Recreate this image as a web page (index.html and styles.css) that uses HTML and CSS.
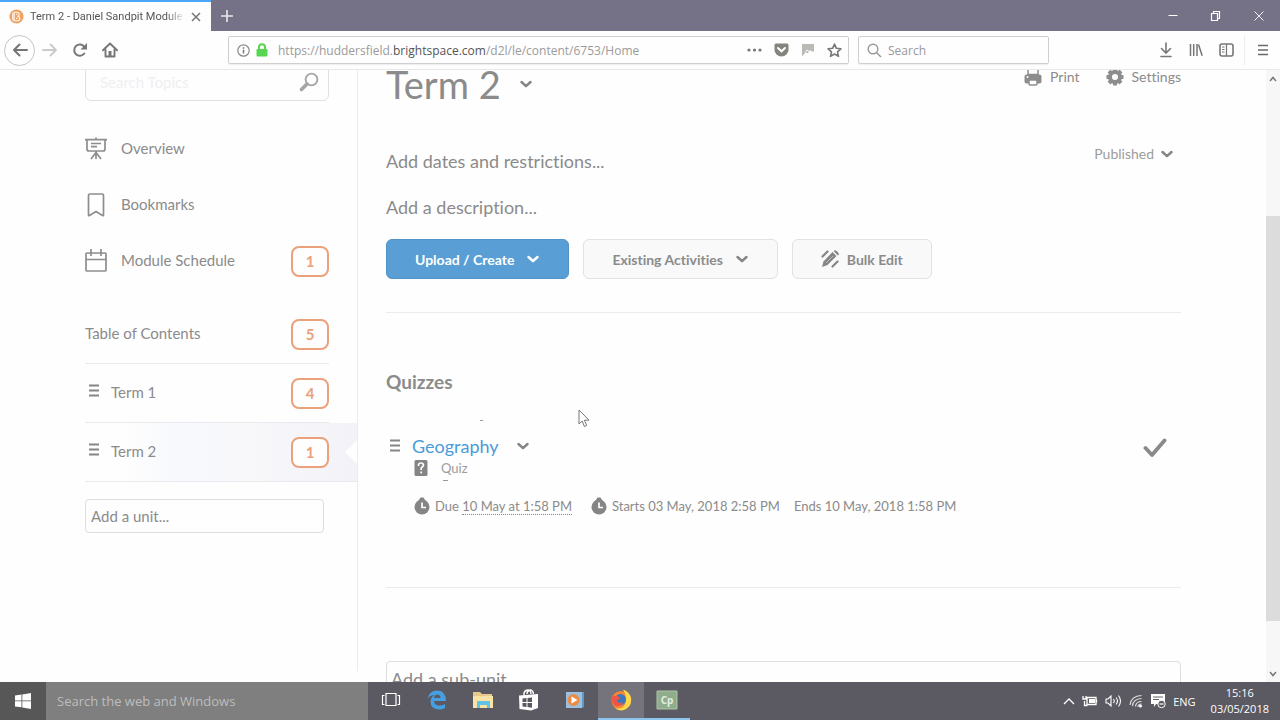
FILE: index.html
```html
<!DOCTYPE html>
<html lang="en">
<head>
<meta charset="utf-8">
<title>Term 2 - Daniel Sandpit Module</title>
<link rel="stylesheet" href="styles.css">
</head>
<body>
<svg class="defs" aria-hidden="true">
  <symbol id="chev" viewBox="0 0 14 14"><path d="M2.500 5 7 9.200 11.500 5" fill="none" stroke="currentColor" stroke-width="2.500" stroke-linecap="round" stroke-linejoin="round"/></symbol>
  <symbol id="grip" viewBox="0 0 10 14"><path d="M0 1.500h10M0 6.500h10M0 11.500h10" stroke="currentColor" stroke-width="1.800"/></symbol>
  <symbol id="clock" viewBox="0 0 16 18"><path d="M4 4.500 6.500.6h3L12 4.500z" fill="currentColor"/><circle cx="8" cy="10" r="7.500" fill="currentColor"/><path d="M8 5.500V10.500h4" fill="none" stroke="#fff" stroke-width="1.700"/></symbol>
</svg>

<header class="tabbar">
  <div class="tab">
    <svg class="favicon" viewBox="0 0 16 16"><circle cx="8" cy="8" r="7.500" fill="#f0a05f"/><path d="M5.500 3.500h3.500q2 .2 2 2.200t-2 2.100q2.500.2 2.500 2.500T9 12.500H5.500zM4 4v8M7.500 5.500H9M7.500 10H9" fill="none" stroke="#fff" stroke-width="1.100"/></svg>
    <span class="tab-title">Term 2 - Daniel Sandpit Module</span>
    <button class="bare" aria-label="Close tab"><svg width="10" height="10" viewBox="0 0 10 10"><path d="m1 1 8 8M9 1 1 9" stroke="#777" stroke-width="1.500"/></svg></button>
  </div>
  <button class="bare new-tab" aria-label="New tab"><svg width="14" height="14" viewBox="0 0 14 14"><path d="M7 1v12M1 7h12" stroke="#e9e8ef" stroke-width="1.600"/></svg></button>
  <div class="window-buttons">
    <button class="bare" aria-label="Minimise"><svg width="12" height="12" viewBox="0 0 12 12"><path d="M1.500 5.500h9" stroke="#fff"/></svg></button>
    <button class="bare" aria-label="Restore"><svg width="12" height="12" viewBox="0 0 12 12"><path d="M1.500 3.500h6v7h-6zM3.500 3.500v-2h6v7h-2" fill="none" stroke="#fff" stroke-width="1.200"/></svg></button>
    <button class="bare" aria-label="Close"><svg width="12" height="12" viewBox="0 0 12 12"><path d="m1.500 1.500 9 9M10.500 1.500l-9 9" stroke="#f1f0f5"/></svg></button>
  </div>
</header>

<nav class="toolbar" aria-label="Browser">
  <button class="bare back" aria-label="Back"><svg width="16" height="14" viewBox="0 0 16 14"><path d="M15 7H2M7.500 1.500 2 7l5.500 5.500" fill="none" stroke="#747474" stroke-width="2" stroke-linecap="round" stroke-linejoin="round"/></svg></button>
  <button class="bare tool" aria-label="Forward"><svg width="16" height="14" viewBox="0 0 16 14"><path d="M1 7h13M8.500 1.500 14 7l-5.500 5.500" fill="none" stroke="#c9c9c9" stroke-width="1.800" stroke-linecap="round" stroke-linejoin="round"/></svg></button>
  <button class="bare tool" aria-label="Reload"><svg width="16" height="16" viewBox="0 0 16 16"><path d="M12.300 11.500A5.600 5.600 0 1 1 12.500 5" fill="none" stroke="#777" stroke-width="2" stroke-linecap="round"/><path d="M15 1v6.500H8.500z" fill="#777"/></svg></button>
  <button class="bare tool" aria-label="Home"><svg width="16" height="16" viewBox="0 0 16 16"><path d="M1 8.300 8 1.500l7 6.800M3.500 7.500v7h9v-7" fill="none" stroke="#777" stroke-width="1.900" stroke-linecap="round" stroke-linejoin="round"/><path d="M6.500 9h3v5.500h-3z" fill="#777"/></svg></button>
  <div class="address">
    <svg width="13" height="13" viewBox="0 0 13 13"><circle cx="6.500" cy="6.500" r="5.700" fill="none" stroke="#8a8a8a" stroke-width="1.200"/><path d="M6.500 5.800v3.700M6.500 3.300v1.500" stroke="#777" stroke-width="1.500"/></svg>
    <svg width="12" height="14" viewBox="0 0 12 14"><path d="M3 6.500V4.300a3 3 0 0 1 6 0v2.200" fill="none" stroke="#58d651" stroke-width="2"/><rect x=".5" y="6" width="11" height="7.500" rx="1" fill="#58d651"/></svg>
    <span class="url">https://huddersfield.<b>brightspace.com</b>/d2l/le/content/6753/Home</span>
    <svg width="15" height="14" viewBox="0 0 15 14"><g fill="#777"><circle cx="2" cy="7" r="1.600"/><circle cx="7.500" cy="7" r="1.600"/><circle cx="13" cy="7" r="1.600"/></g></svg>
    <svg width="15" height="14" viewBox="0 0 15 14"><path d="M2 .5h11q1.500 0 1.500 1.500v5a7 6.500 0 0 1-14 0V2Q.5.500 2 .5z" fill="#84847e"/><path d="m4 5 3.500 3.300L11 5" fill="none" stroke="#fff" stroke-width="2" stroke-linecap="round"/></svg>
    <svg width="14" height="14" viewBox="0 0 14 14"><path d="M2 1h10q1 0 1 1v6.500h-2L9 7 7 10H4l-3 3.500V2q0-1 1-1z" fill="#b9b9b5"/><path d="m4 10 2-3 2 1.500" fill="none" stroke="#fff"/></svg>
    <svg width="15" height="15" viewBox="0 0 15 15"><path d="m7.500 1.200 1.900 4.100 4.500.5-3.400 3 1 4.500-4-2.300-4 2.300 1-4.500-3.400-3 4.500-.5z" fill="none" stroke="#777" stroke-width="1.600" stroke-linejoin="round"/></svg>
  </div>
  <label class="browser-search">
    <svg width="15" height="15" viewBox="0 0 15 15"><circle cx="6" cy="6" r="4.800" fill="none" stroke="#999" stroke-width="1.400"/><path d="m9.500 9.500 4.500 4.500" stroke="#999" stroke-width="1.500"/></svg>
    <input type="text" placeholder="Search" aria-label="Search the web">
  </label>
  <div class="tools-end">
    <button class="bare" aria-label="Downloads"><svg width="14" height="16" viewBox="0 0 14 16"><path d="M7 1v9.500M2.500 6.500 7 11l4.500-4.500M2 14.500h10" fill="none" stroke="#777" stroke-width="1.600" stroke-linecap="round"/></svg></button>
    <button class="bare" aria-label="Library"><svg width="14" height="14" viewBox="0 0 14 14"><path d="M1.500 1v12M4.700 1v12M8 1v12M9.500 1.500l3.700 11.300" stroke="#777" stroke-width="1.500"/></svg></button>
    <button class="bare" aria-label="Sidebars"><svg width="15" height="14" viewBox="0 0 15 14"><rect x="1" y="1" width="13" height="12" rx="2" fill="none" stroke="#777" stroke-width="1.600"/><path d="M7.500 1v12M3 4h2.500M3 6.500h2.500M3 9h2.500" stroke="#777" stroke-width="1.200"/></svg></button>
    <button class="bare menu" aria-label="Menu"><svg width="12" height="14" viewBox="0 0 12 14"><path d="M1 2.500h10M1 7h10M1 11.500h10" stroke="#6a6a6a" stroke-width="1.700"/></svg></button>
  </div>
</nav>

<div class="page">
  <aside class="sidebar">
    <label class="topic-search">
      <input type="text" placeholder="Search Topics" aria-label="Search Topics">
      <svg width="20" height="20" viewBox="0 0 20 20"><circle cx="12.500" cy="7.500" r="5.900" fill="none" stroke="#a5a5a5" stroke-width="1.900"/><path d="m8 12-5.500 5.500" stroke="#a5a5a5" stroke-width="3.600" stroke-linecap="round"/></svg>
    </label>
    <nav class="links" aria-label="Module">
      <a href="#"><svg width="22" height="24" viewBox="0 0 22 24" fill="none" stroke="#8d8d8d" stroke-width="1.700"><path d="M0 2.700h22M11 .5v2M2 3v9q0 2 2 2h14q2 0 2-2V3M6 6.500h10M6 9.700h6M11 14v8M11 15.500l-5 6.500M11 15.500l5 6.500"/></svg><span>Overview</span></a>
      <a href="#"><svg width="22" height="24" viewBox="0 0 22 24"><path d="M5 1h12q1.500 0 1.500 1.500V22q0 1-1 .5L11 18.500l-6.500 4q-1 .5-1-.5V2.500Q3.500 1 5 1z" fill="none" stroke="#8d8d8d" stroke-width="1.700"/></svg><span>Bookmarks</span></a>
      <a href="#"><svg width="22" height="24" viewBox="0 0 22 24"><path d="M1 5q0-1 1-1h18q1 0 1 1v16q0 1-1 1H2q-1 0-1-1zM1 10.500h20M6 0v7M16 0v7" fill="none" stroke="#8d8d8d" stroke-width="1.700"/></svg><span>Module Schedule</span><b class="badge">1</b></a>
    </nav>
    <div class="toc">
      <a class="unit" href="#"><span>Table of Contents</span><b class="badge">5</b></a>
      <a class="unit" href="#"><svg class="grip"><use href="#grip"/></svg><span>Term 1</span><b class="badge">4</b></a>
      <a class="unit selected" href="#"><svg class="grip"><use href="#grip"/></svg><span>Term 2</span><b class="badge">1</b></a>
    </div>
    <input class="field add-unit" type="text" placeholder="Add a unit..." aria-label="Add a unit">
  </aside>

  <main class="content">
    <div class="heading">
      <h1>Term 2</h1>
      <button class="bare" aria-label="Unit actions"><svg class="chev"><use href="#chev"/></svg></button>
      <div class="actions">
        <button class="bare action"><svg width="18" height="18" viewBox="0 0 18 18"><path d="M4 0h10v6.500H4z" fill="#fefefe" stroke="#8d8d8d" stroke-width="1.500"/><rect x=".5" y="6.500" width="17" height="9" rx="2" fill="#8d8d8d"/><rect x="5" y="12" width="8" height="5" rx="1" fill="#fefefe" stroke="#8d8d8d" stroke-width="1.500"/><circle cx="3.500" cy="9" r="1" fill="#fefefe"/></svg>Print</button>
        <button class="bare action"><svg width="18" height="18" viewBox="0 0 18 18"><g fill="none" stroke="#8d8d8d"><circle cx="9" cy="9" r="5" stroke-width="4"/><path d="M9 .5v3M9 14.500v3M.5 9h3M14.500 9h3M3 3l2 2M13 13l2 2M15 3l-2 2M5 13l-2 2" stroke-width="4"/></g></svg>Settings</button>
      </div>
    </div>
    <div class="dates">
      <button class="bare prompt">Add dates and restrictions...</button>
      <button class="bare published">Published <svg class="chev"><use href="#chev"/></svg></button>
    </div>
    <button class="bare prompt">Add a description...</button>
    <div class="buttons">
      <button class="btn primary">Upload / Create <svg class="chev"><use href="#chev"/></svg></button>
      <button class="btn">Existing Activities <svg class="chev"><use href="#chev"/></svg></button>
      <button class="btn bulk"><svg width="18" height="18" viewBox="0 0 18 18"><path d="m1 17 1.500-5.500 9-9.500 4 4-9 9z" fill="#858585"/><path d="m12.500 1 1.500-.8q1 0 2.500 1.500t1.300 2.500L17 5.500z" fill="#858585"/><path d="m1.500 6.500 5-5M11.500 16.500l5-5" stroke="#858585" stroke-width="2.200" stroke-linecap="round"/><path d="m5 13 7-7" stroke="#ccc" stroke-width=".8"/></svg>Bulk Edit</button>
    </div>
    <hr>
    <h2>Quizzes</h2>
    <article class="quiz">
      <svg class="grip"><use href="#grip"/></svg>
      <div class="quiz-body">
        <div class="quiz-title"><a href="#">Geography</a><button class="bare" aria-label="Geography actions"><svg class="chev"><use href="#chev"/></svg></button></div>
        <div class="quiz-type"><svg width="14" height="16" viewBox="0 0 14 16"><rect x=".5" width="13" height="16" rx="1.500" fill="#858585"/><path d="M4.500 6V4.800Q4.800 3 7 3t2.500 2Q9.500 6.300 7.200 8v2" fill="none" stroke="#fff" stroke-width="1.700"/><path d="M6.300 11.500h1.800v1.800H6.300z" fill="#fff"/></svg>Quiz</div>
        <div class="quiz-dates">
          <svg class="clock"><use href="#clock"/></svg><span>Due <u>10 May at 1:58 PM</u></span>
          <svg class="clock second"><use href="#clock"/></svg><span>Starts 03 May, 2018 2:58 PM</span><span class="ends">Ends 10 May, 2018 1:58 PM</span>
        </div>
      </div>
      <svg class="tick" width="24" height="20" viewBox="0 0 24 20"><path d="m2.500 10 6.500 7L21.500 2.500" fill="none" stroke="#8a8a8a" stroke-width="3.800" stroke-linecap="round" stroke-linejoin="round"/></svg>
    </article>
    <hr>
    <input class="field sub-unit" type="text" placeholder="Add a sub-unit..." aria-label="Add a sub-unit">
  </main>

  <div class="scrollbar" aria-hidden="true">
    <svg width="8" height="6" viewBox="0 0 8 6"><path d="m1 5 3-3.500L7 5" fill="none" stroke="#777" stroke-width="1.500"/></svg>
    <div class="track"><div class="thumb"></div></div>
    <svg width="8" height="6" viewBox="0 0 8 6"><path d="m1 1 3 3.500L7 1" fill="none" stroke="#777" stroke-width="1.500"/></svg>
  </div>
</div>

<footer class="taskbar">
  <button class="bare start" aria-label="Start"><svg width="16" height="16" viewBox="0 0 16 16" fill="#fff"><path d="M0 2.500 6.500 1.500v6H0zM7.300 1.400 16 0v7.500H7.300zM0 8.300h6.500v6L0 13.500zM7.300 8.300H16V16l-8.700-1.400z"/></svg></button>
  <input class="task-search" type="text" placeholder="Search the web and Windows" aria-label="Search the web and Windows">
  <div class="apps">
    <button class="bare" aria-label="Task view"><svg width="20" height="16" viewBox="0 0 20 16"><path d="M5 1.500h10v12H5zM3.500 3.500h-2v9h2M16.500 3.500h2v9h-2" fill="none" stroke="#fff" stroke-width="1.200"/></svg></button>
    <button class="bare" aria-label="Edge"><svg width="20" height="20" viewBox="0 0 20 20"><path d="M.5 9Q2 .5 10.500.5 19 1 19 11H7q.5 4.500 5.500 4.500 3 0 5.500-1.500v4q-2.500 1.500-6.500 1.500-8-.5-8-8Q3.500 7.500 7.500 5 3 5 .5 9zM7 8h6.500Q13.500 4.500 10.500 4.500 7.500 4.500 7 8z" fill="#479fe3"/></svg></button>
    <button class="bare" aria-label="File Explorer"><svg width="22" height="18" viewBox="0 0 22 18"><path d="M1 1h7l2 2h10v14H1z" fill="#e8c98b"/><path d="M1 5h20v12H1z" fill="#fae3a5"/><path d="M5 10h13v7h-3v-3H8v3H5z" fill="#5fc3e6"/></svg></button>
    <button class="bare" aria-label="Store"><svg width="20" height="22" viewBox="0 0 20 22"><path d="M0 6.500 19 5v14L12 21.500.5 20z" fill="#fff"/><path d="M5 6V4q1-3 4-3t3 4M8 5q0-3 3-4 3 0 3.500 4" fill="none" stroke="#fff" stroke-width="1.400"/><path d="m3.500 9.500 4-.5v4h-4zm5-.6L13 8.500V13H8.500zm-5 5.100h4v4l-4-.5zm5 0H13v4.700l-4.500-.6z" fill="#59575f"/></svg></button>
    <button class="bare" aria-label="Media player"><svg width="20" height="18" viewBox="0 0 20 18"><path d="M1 1h16v16H1z" fill="#9cc1de"/><path d="M17 1h2v15l-2 1z" fill="#5e9ac8"/><circle cx="8.500" cy="9" r="6" fill="#ec8c43"/><path d="M6.500 5.500v7l6-3.500z" fill="#fff"/></svg></button>
    <button class="bare active" aria-label="Firefox"><svg width="22" height="22" viewBox="0 0 22 22"><circle cx="11" cy="11.500" r="9.500" fill="#f58735"/><path d="M13 .5q6 2 8 8 1.500 10-8 12.800-5 .7-8-2 8 1 10-4 3-7-2-14.800z" fill="#ffd74a"/><circle cx="10.500" cy="10.500" r="5.500" fill="#3b78bd"/><path d="M1.500 5q1 3 3.500 2 4-.5 5 2-1 2-3.500 2.500 1.500 3.500 6.500 2-2.500 5-8 3.500Q.5 13 1.500 5z" fill="#ee5746"/></svg></button>
    <button class="bare open" aria-label="Captivate"><svg width="22" height="20" viewBox="0 0 22 20"><path d="M1 1h20v18H1z" fill="#8fad8c" stroke="#afc7aa"/><text x="11" y="14" text-anchor="middle" class="cp">Cp</text></svg></button>
  </div>
  <div class="tray">
    <svg width="12" height="8" viewBox="0 0 12 8"><path d="m1 7 5-5 5 5" fill="none" stroke="#fff" stroke-width="1.300"/></svg>
    <svg width="16" height="12" viewBox="0 0 16 12"><path d="M5 2.500h9v7H5zM14.500 4.500v3M2.500 6v4.500h3M1 1v3h3V1" fill="none" stroke="#fff" stroke-width="1.300"/><path d="M7 4h6v4H7z" fill="#fff"/></svg>
    <svg width="17" height="14" viewBox="0 0 17 14"><path d="M1 5h2l3-3v10L3 9H1zM8.500 5q1.500 2 0 4M11 3.500q3 3.500 0 7M13.500 1.500q4 5.500 0 11" fill="none" stroke="#fff" stroke-width="1.100"/></svg>
    <svg width="14" height="14" viewBox="0 0 14 14"><path d="M1 11Q2 2 12.500 1.500M3.500 12Q4 5 12.500 4.500M6.500 12.500q.5-5 6-5M9 13q0-3 3.500-3" fill="none" stroke="#ddd" stroke-width="1.200"/><circle cx="11.500" cy="12" r="1.500" fill="#fff"/></svg>
    <svg width="16" height="16" viewBox="0 0 16 16"><path d="M1 1h14v10H6l-2 3v-3H1z" fill="#fff"/><path d="M3 4h10M3 6.500h6" stroke="#66646c"/><circle cx="11.500" cy="11" r="3.700" fill="#59575f" stroke="#fff"/><path d="M9.500 11h4" stroke="#fff" stroke-width="1.200"/></svg>
    <span>ENG</span>
    <time>15:16<br>03/05/2018</time>
  </div>
</footer>

<svg class="pointer" width="12" height="19" viewBox="0 0 12 19" aria-hidden="true"><path d="M1 1v14l3.200-3 2.200 5.500 2.300-1-2.300-5.300H11z" fill="#fff" stroke="#777"/></svg>
</body>
</html>
```
FILE: styles.css
```css
* { box-sizing: border-box; }
body {
  margin: 0;
  height: 100vh;
  display: flex;
  flex-direction: column;
  overflow: hidden;
  background: #fefefe;
  color: #8b8b8b;
  font-family: Lato, sans-serif;
  font-size: 15px;
  font-variant-ligatures: none;
}
svg { flex: none; display: block; }
a { color: inherit; text-decoration: none; }
input, button { font: inherit; color: inherit; font-variant-ligatures: none; }
input { min-width: 0; outline: 0; }
input::placeholder { color: inherit; opacity: 1; }
.defs { position: absolute; width: 0; height: 0; }
.bare {
  display: flex;
  align-items: center;
  justify-content: center;
  padding: 0;
  border: 0;
  background: none;
}
.chev { width: 14px; height: 14px; color: #858585; }
.grip { width: 10px; height: 14px; color: #858585; }

/* Browser chrome */
.tabbar, .toolbar, .taskbar { flex: none; display: flex; font-family: "Open Sans", sans-serif; }
.tabbar { height: 31px; background: #757187; }
.tab {
  display: flex;
  align-items: center;
  gap: 6px;
  width: 211px;
  padding: 0 10px 0 9px;
  border-top: 2px solid #4ea6f8;
  background: #fefefe;
}
.favicon { width: 15px; height: 15px; }
.tab-title {
  flex: 1;
  overflow: hidden;
  white-space: nowrap;
  font-family: Roboto, sans-serif;
  font-size: 11px;
  color: #555;
  mask-image: linear-gradient(90deg, #000 88%, transparent);
}
.new-tab { width: 32px; }
.window-buttons { display: flex; gap: 31px; margin-left: auto; padding-right: 15px; }
.toolbar {
  height: 39px;
  align-items: center;
  padding-left: 4px;
  border-bottom: 1px solid #e8e8ea;
  background: #fefefe;
}
.back { width: 31px; height: 31px; border: 1px solid #c4c4c4; border-radius: 50%; }
.tool { width: 30px; }
.address, .browser-search {
  display: flex;
  align-items: center;
  height: 28px;
  border: 1px solid #cfcfcf;
  border-radius: 2px;
  box-shadow: 0 1px 1px #eee;
}
.address { flex: 1; gap: 12px; margin-left: 103px; padding: 0 6px 0 8px; }
.address svg + svg { margin-left: -6px; }
.address .url ~ svg { margin-left: 0; }
.url { flex: 1; margin-left: -2px; font-size: 12px; color: #9b9b9b; white-space: nowrap; overflow: hidden; }
.url b { font-weight: 400; color: #555; }
.browser-search { width: 191px; margin-left: 9px; gap: 6px; padding: 0 8px; font-size: 12px; color: #999; }
.browser-search input { flex: 1; border: 0; padding: 0; background: none; }
.tools-end { display: flex; align-items: center; gap: 16px; margin-left: 110px; padding-right: 11px; }
.menu { height: 30px; margin-left: -6px; padding-left: 12px; border-left: 1px solid #eee; }

/* Page */
.page { flex: 1; min-height: 0; display: flex; overflow: hidden; }
.sidebar {
  flex: none;
  width: 358px;
  margin: -8px 0 11px;
  padding-left: 85px;
  border-right: 1px solid #ececee;
}
.topic-search {
  display: flex;
  align-items: center;
  width: 244px;
  height: 39px;
  padding: 0 9px 0 14px;
  border: 1px solid #e0e0e0;
  border-radius: 6px;
}
.topic-search input { flex: 1; padding: 0; border: 0; background: none; color: #efeff2; }
.links { padding: 20px 28px 16px 0; }
.links a { display: flex; align-items: center; gap: 14px; height: 56px; }
.links a > span { padding-bottom: 3px; }
.badge {
  display: flex;
  align-items: center;
  justify-content: center;
  width: 38px;
  height: 31px;
  margin-left: auto;
  border: 2px solid #eba17c;
  border-radius: 8px;
  background: #fefefe;
  color: #eba17c;
}
.unit {
  position: relative;
  display: flex;
  align-items: center;
  gap: 14px;
  height: 59px;
  margin-right: 28px;
  border-bottom: 1px solid #e8eaed;
}
.unit > span { padding-bottom: 3px; }
.unit .grip { margin: 0 -2px 4px 4px; }
.selected {
  margin-right: 0;
  padding-right: 28px;
  background: linear-gradient(90deg, #fefefe 15%, #f7f9fc 32%, #f8f8fb 60%, #f2f2f8);
}
.selected::after {
  content: "";
  position: absolute;
  right: 0;
  top: 17px;
  border: 12px solid transparent;
  border-left: 0;
  border-right-color: #fefefe;
}
.field { display: block; border: 1px solid #dcdee0; border-radius: 4px; background: #fefefe; }
.add-unit { width: 239px; height: 34px; margin-top: 17px; padding: 0 5px; }
.content { flex: 1; min-width: 0; margin-top: -9px; padding: 0 85px 0 28px; }
.heading { display: flex; align-items: center; height: 46px; gap: 18px; }
h1 { margin: 0; font-size: 38px; font-weight: 400; line-height: 46px; }
.actions { display: flex; gap: 26px; align-self: flex-start; margin-left: auto; padding-top: 6px; }
.action { gap: 8px; font-size: 14px; line-height: 20px; }
.prompt { font-size: 18px; line-height: 28px; }
.dates { display: flex; justify-content: space-between; height: 46px; margin-top: 40px; }
.dates .prompt { align-self: flex-start; }
.published { align-self: flex-start; gap: 6px; padding-right: 7px; font-size: 14px; line-height: 14px; color: #9c9c9c; }
.buttons { display: flex; gap: 14px; margin-top: 18px; }
.btn {
  display: flex;
  align-items: center;
  gap: 12px;
  height: 40px;
  padding: 0 28px;
  border: 1px solid #e2e2e4;
  border-radius: 6px;
  background: #f9f9fa;
  font-size: 14px;
  font-weight: 700;
}
.btn.bulk { gap: 8px; }
.primary { background: #599fd5; border-color: #5093c8; color: #fff; }
.primary .chev { color: #fff; }
hr { margin: 33px 0 0; border: 0; border-top: 1px solid #ebebed; }
h2 { margin: 55px 0 0; font-size: 19px; line-height: 28px; }
.quiz { position: relative; display: flex; align-items: flex-start; margin-top: 36px; padding-left: 4px; }
.quiz > .grip { margin-top: 7px; }
.quiz-body { flex: 1; padding-left: 12px; }
.quiz::before, .quiz-body::before { content: ""; position: absolute; height: 1px; background: #999; }
.quiz::before { left: 94px; top: -12px; width: 3px; }
.quiz-body::before { left: 57px; top: 48px; width: 5px; }
.quiz-title { display: flex; align-items: center; gap: 17px; font-size: 18px; line-height: 28px; }
.quiz-title a { color: #4a9bd9; }
.quiz-type { display: flex; align-items: center; gap: 13px; padding-left: 2px; font-size: 13px; line-height: 16px; color: #9c9c9c; }
.quiz-dates { display: flex; align-items: center; gap: 5px; margin-top: 20px; padding-left: 2px; font-size: 13px; line-height: 20px; white-space: nowrap; }
.quiz-dates u { text-decoration: none; border-bottom: 1px dotted #888; }
.clock { width: 16px; height: 18px; color: #858585; }
.second { margin-left: 14px; }
.ends { margin-left: 9px; }
.tick { margin: 6px 14px 0 0; }
.quiz + hr { margin-top: 71px; }
.sub-unit { width: 100%; height: 36px; margin-top: 73px; padding: 0 4px; font-size: 18px; }
.scrollbar {
  flex: none;
  width: 14px;
  display: flex;
  flex-direction: column;
  align-items: center;
  padding: 6px 0 5px;
  background: #f7f7f8;
}
.track { flex: 1; width: 100%; padding: 134px 0 50px; }
.thumb { height: 100%; background: #dcdcdd; }

/* Taskbar */
.taskbar { height: 38px; background: #5b5961; color: #fff; font-size: 12px; }
.start { width: 46px; background: #575757; }
.task-search { width: 322px; padding: 0 11px; border: 0; background: #7f7f7f; color: #bdbdbd; font-size: 13px; }
.apps { display: flex; }
.apps .bare { width: 46px; border-bottom: 2px solid transparent; }
.apps .active { background: #75737b; border-color: #8cc4ee; }
.apps .open { border-color: #8cc4ee; }
.cp { font: 700 10px "Open Sans", sans-serif; fill: #e4ede2; }
.tray { display: flex; align-items: center; gap: 7px; margin-left: auto; padding-right: 11px; }
.tray span { font-size: 11px; }
.tray time { margin-left: 8px; font-size: 11px; line-height: 16px; text-align: center; }

.pointer { position: absolute; left: 578px; top: 409px; }
```
